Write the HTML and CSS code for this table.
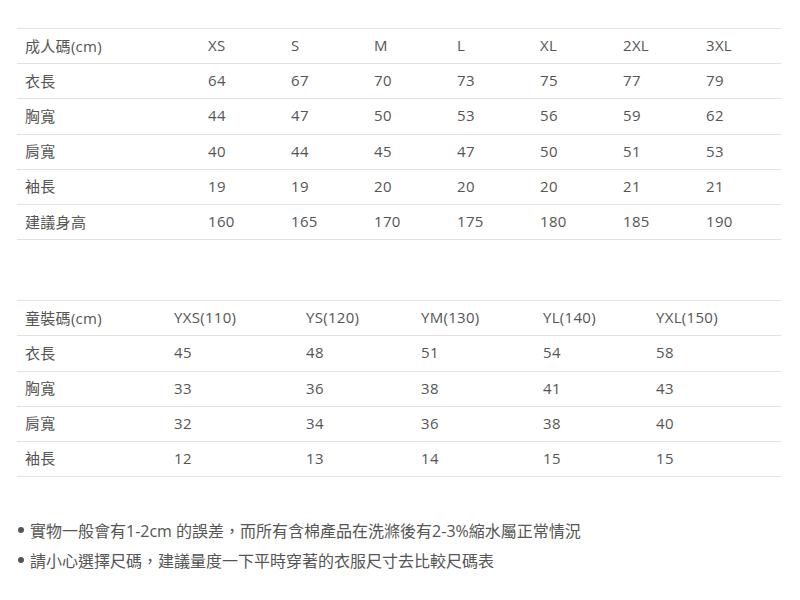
FILE: index.html
```html
<!DOCTYPE html>
<html lang="zh-Hant">
<head>
<meta charset="utf-8">
<link rel="stylesheet" href="styles.css">
</head>
<body>
<div class="page">
  <table class="size-table adult">
    <colgroup><col class="c-first"><col><col><col><col><col><col><col></colgroup>
    <tr><td>成人碼(cm)</td><td>XS</td><td>S</td><td>M</td><td>L</td><td>XL</td><td>2XL</td><td>3XL</td></tr>
    <tr><td>衣長</td><td>64</td><td>67</td><td>70</td><td>73</td><td>75</td><td>77</td><td>79</td></tr>
    <tr><td>胸寬</td><td>44</td><td>47</td><td>50</td><td>53</td><td>56</td><td>59</td><td>62</td></tr>
    <tr><td>肩寬</td><td>40</td><td>44</td><td>45</td><td>47</td><td>50</td><td>51</td><td>53</td></tr>
    <tr><td>袖長</td><td>19</td><td>19</td><td>20</td><td>20</td><td>20</td><td>21</td><td>21</td></tr>
    <tr><td>建議身高</td><td>160</td><td>165</td><td>170</td><td>175</td><td>180</td><td>185</td><td>190</td></tr>
  </table>

  <table class="size-table kids">
    <colgroup><col class="k1"><col class="k2"><col class="k3"><col class="k4"><col class="k5"><col class="k6"></colgroup>
    <tr><td>童裝碼(cm)</td><td>YXS(110)</td><td>YS(120)</td><td>YM(130)</td><td>YL(140)</td><td>YXL(150)</td></tr>
    <tr><td>衣長</td><td>45</td><td>48</td><td>51</td><td>54</td><td>58</td></tr>
    <tr><td>胸寬</td><td>33</td><td>36</td><td>38</td><td>41</td><td>43</td></tr>
    <tr><td>肩寬</td><td>32</td><td>34</td><td>36</td><td>38</td><td>40</td></tr>
    <tr><td>袖長</td><td>12</td><td>13</td><td>14</td><td>15</td><td>15</td></tr>
  </table>

  <ul class="notes">
    <li>實物一般會有1-2cm 的誤差，而所有含棉產品在洗滌後有2-3%縮水屬正常情況</li>
    <li>請小心選擇尺碼，建議量度一下平時穿著的衣服尺寸去比較尺碼表</li>
  </ul>
</div>
</body>
</html>
```

FILE: styles.css
```css
html, body {
  margin: 0;
  padding: 0;
  background: #ffffff;
}
.page {
  padding: 28px 19px 0 17px;
  font-family: "Open Sans", "Noto Sans CJK TC", sans-serif;
  color: #555555;
}
.size-table {
  width: 764px;
  border-collapse: collapse;
  table-layout: fixed;
  font-size: 15px;
  letter-spacing: 0.3px;
}
.size-table td {
  height: 35.2px;
  padding: 0 8px 2px 8px;
  box-sizing: border-box;
  border-top: 1px solid #e2e2e2;
  border-bottom: 1px solid #e2e2e2;
  vertical-align: middle;
  white-space: nowrap;
}
.adult .c-first { width: 183px; }
.kids { margin-top: 60px; }
.kids .k1 { width: 149px; }
.kids .k2 { width: 132px; }
.kids .k3 { width: 115px; }
.kids .k4 { width: 122px; }
.kids .k5 { width: 113px; }
.kids .k6 { width: 133px; }
.notes {
  list-style: none;
  margin: 38px 0 0 0;
  padding: 0;
  font-size: 16px;
}
.notes li {
  display: flex;
  align-items: center;
  height: 30px;
}
.notes li::before {
  content: "";
  width: 6px;
  height: 6px;
  border-radius: 50%;
  background: #555555;
  margin: 0 6px 0 1px;
}
```
